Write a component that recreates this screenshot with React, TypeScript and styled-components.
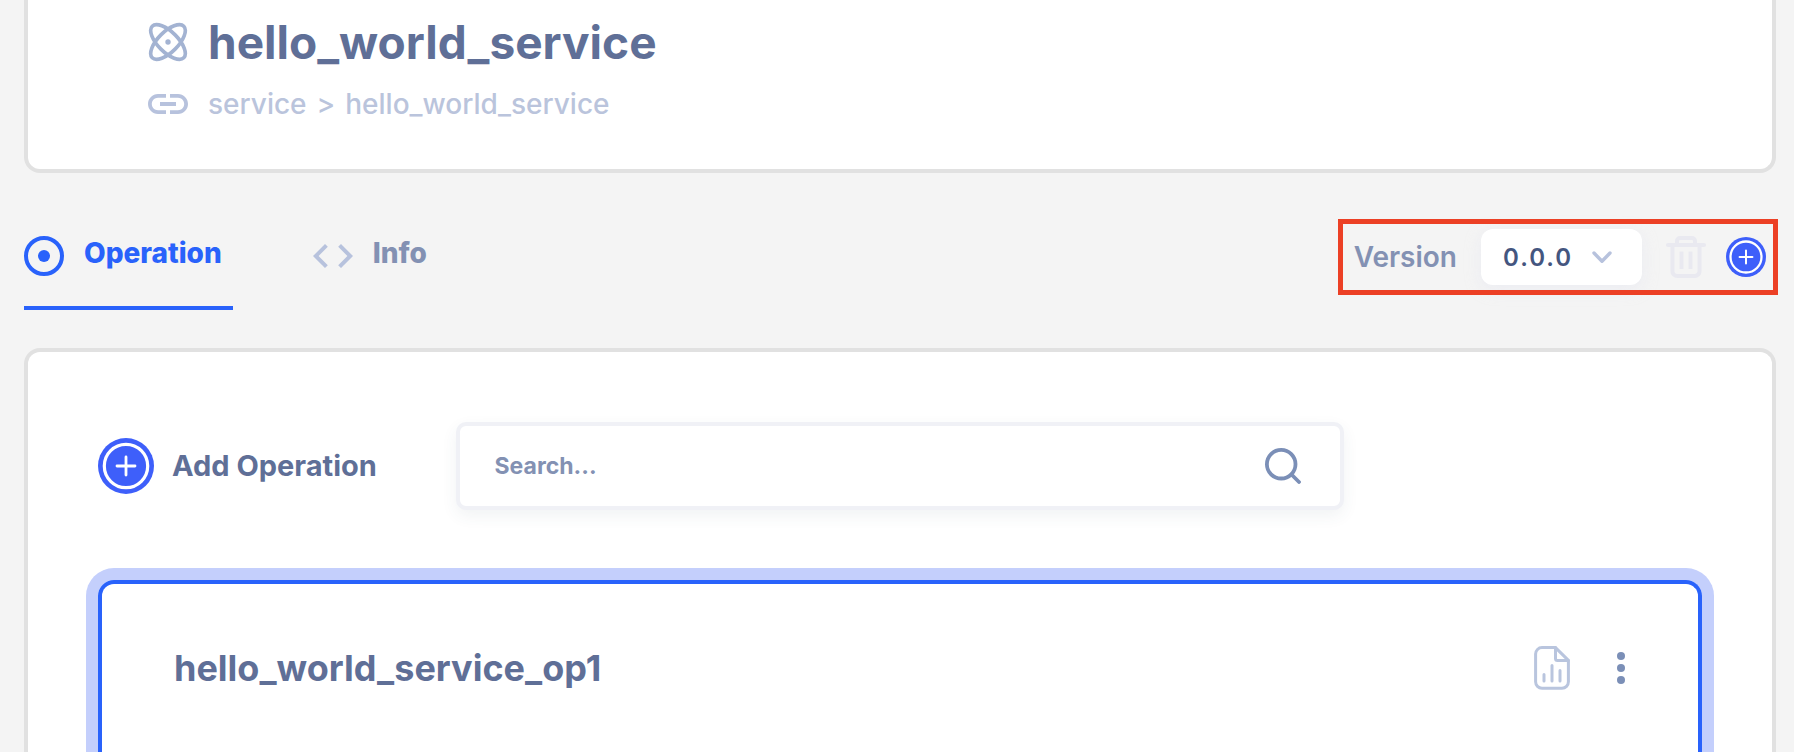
import React from "react";
import styled, { createGlobalStyle } from "styled-components";

const GlobalStyle = createGlobalStyle`
  *, *::before, *::after { box-sizing: border-box; }
  html, body { margin: 0; padding: 0; height: 100%; background: #f4f4f4; }
  #root { height: 100%; }
  body, button, input, select {
    font-family: Inter, "Liberation Sans", sans-serif;
  }
  button {
    margin: 0;
    padding: 0;
    border: 0;
    background: none;
    cursor: pointer;
  }
  svg { display: block; flex: none; }
`;

const Page = styled.div`
  display: flex;
  flex-direction: column;
  min-height: 100%;
  padding: 0 18px 0 24px;
`;

const ServiceHeader = styled.header`
  display: flex;
  flex-direction: column;
  gap: 16px;
  padding: 16px 120px 45px;
  background: #ffffff;
  border: 4px solid #e1e1e1;
  border-top: 0;
  border-radius: 0 0 16px 16px;
`;

const HeaderRow = styled.div`
  display: flex;
  align-items: center;
  gap: 20px;
`;

const ServiceTitle = styled.h1`
  margin: 0;
  font-size: 46px;
  line-height: 52px;
  font-weight: 700;
  color: #5f6f97;
`;

const Breadcrumb = styled.nav`
  display: flex;
  gap: 10px;
  font-size: 28px;
  line-height: 40px;
  font-weight: 500;
  color: #bac4dc;
`;

const Crumb = styled.a`
  color: inherit;
  text-decoration: none;
`;

const Toolbar = styled.div`
  display: flex;
  justify-content: space-between;
  align-items: flex-end;
  margin: 46px 0 38px;
`;

const Tabs = styled.div`
  display: flex;
  gap: 80px;
  padding-top: 17px;
`;

const Tab = styled.button<{ $active?: boolean }>`
  display: flex;
  align-items: flex-start;
  gap: 20px;
  padding: 0 11px 30px 0;
  border-bottom: 4px solid ${(p) => (p.$active ? "#2962fb" : "transparent")};
  font-size: 28px;
  line-height: 34px;
  font-weight: 800;
  color: ${(p) => (p.$active ? "#2962fb" : "#8391b3")};
`;

const TabIcon = styled.span`
  display: flex;
  align-items: center;
  height: 40px;
`;

const VersionPanel = styled.div`
  position: relative;
  display: flex;
  align-items: center;
  align-self: flex-start;
  height: 76px;
  margin-right: -2px;
  padding: 0 12px 0 16px;

  &::after {
    content: "";
    position: absolute;
    inset: 0;
    border: 5px solid #ec4025;
    pointer-events: none;
  }
`;

const VersionLabel = styled.label`
  margin-right: 24px;
  font-size: 28px;
  line-height: 34px;
  font-weight: 600;
  color: #8391b3;
`;

const SelectBox = styled.span`
  position: relative;
  display: flex;
  width: 161px;
  margin-right: 24px;
`;

const VersionSelect = styled.select`
  appearance: none;
  width: 100%;
  height: 56px;
  padding: 0 50px 0 22px;
  border: 0;
  border-radius: 12px;
  background: #ffffff;
  box-shadow: 0 4px 16px rgba(220, 224, 240, 0.35);
  font-size: 24px;
  font-weight: 600;
  letter-spacing: 2px;
  color: #44567f;
`;

const SelectArrow = styled.span`
  position: absolute;
  top: 22px;
  right: 30px;
  pointer-events: none;
`;

const DeleteButton = styled.button`
  margin-right: 20px;
`;

const OperationsPanel = styled.main`
  flex: 1;
  display: flex;
  flex-direction: column;
  gap: 70px;
  padding: 70px 70px 0;
  background: #ffffff;
  border: 4px solid #e1e1e1;
  border-bottom: 0;
  border-radius: 16px 16px 0 0;
`;

const ActionRow = styled.div`
  display: grid;
  grid-template-columns: 2fr 5fr 2fr;
  column-gap: 2px;
  align-items: center;
`;

const AddButton = styled.button`
  display: flex;
  align-items: center;
  gap: 18px;
  font-size: 29px;
  line-height: 36px;
  font-weight: 700;
  color: #5f6f97;
  white-space: nowrap;
`;

const SearchBox = styled.label`
  display: flex;
  align-items: center;
  height: 88px;
  padding: 0 39px 0 35px;
  background: #ffffff;
  border: 4px solid #f0f1f6;
  border-radius: 10px;
  box-shadow: 0 6px 16px rgba(60, 80, 100, 0.07);
`;

const SearchInput = styled.input`
  flex: 1;
  min-width: 0;
  padding: 0;
  border: 0;
  outline: 0;
  background: none;
  font-size: 23px;
  line-height: 30px;
  font-weight: 700;
  color: #5f6f97;

  &::placeholder {
    color: #8391b3;
    opacity: 1;
  }
`;

const OperationCard = styled.article`
  flex: 1;
  display: flex;
  align-items: flex-start;
  justify-content: space-between;
  padding: 62px 73px 0 72px;
  border: 4px solid #2962fb;
  border-bottom: 0;
  border-radius: 16px 16px 0 0;
  box-shadow: 0 0 0 12px #c4cffc;
`;

const OperationName = styled.h2`
  margin: 0;
  font-size: 36px;
  line-height: 44px;
  font-weight: 700;
  color: #5f6f97;
`;

const CardActions = styled.div`
  display: flex;
  align-items: center;
  gap: 47px;
  height: 44px;
`;

const AtomIcon = () => (
  <svg width="40" height="40" viewBox="1.6 1.6 20.8 20.8" fill="none" stroke="#a3b3d2" strokeWidth="1.9">
    <circle cx="12" cy="12" r="1.4" fill="#a3b3d2" stroke="none" />
    <path d="M20.2 20.2c2.04-2.03.02-7.36-4.5-11.9-4.54-4.52-9.87-6.54-11.9-4.5-2.04 2.03-.02 7.36 4.5 11.9 4.54 4.52 9.87 6.54 11.9 4.5Z" />
    <path d="M15.7 15.7c4.52-4.54 6.54-9.87 4.5-11.9-2.03-2.04-7.36-.02-11.9 4.5-4.52 4.54-6.54 9.87-4.5 11.9 2.03 2.04 7.36.02 11.9-4.5Z" />
  </svg>
);

const LinkIcon = () => (
  <svg width="40" height="20" viewBox="2 7 20 10" fill="#b7c2dd">
    <path d="M3.9 12c0-1.71 1.39-3.1 3.1-3.1h4V7H7c-2.76 0-5 2.24-5 5s2.24 5 5 5h4v-1.9H7c-1.71 0-3.1-1.39-3.1-3.1zM8 13h8v-2H8v2zm9-6h-4v1.9h4c1.71 0 3.1 1.39 3.1 3.1s-1.39 3.1-3.1 3.1h-4V17h4c2.76 0 5-2.24 5-5s-2.24-5-5-5z" />
  </svg>
);

const TargetIcon = () => (
  <svg width="40" height="40" viewBox="0 0 40 40">
    <circle cx="20" cy="20" r="18" fill="none" stroke="#2962fb" strokeWidth="4" />
    <circle cx="20" cy="20" r="6" fill="#2962fb" />
  </svg>
);

const CodeIcon = () => (
  <svg width="40" height="24" viewBox="2 6 20 12" fill="#b7c2dd">
    <path d="M9.4 16.6L4.8 12l4.6-4.6L8 6l-6 6 6 6 1.4-1.4zm5.2 0l4.6-4.6-4.6-4.6L16 6l6 6-6 6-1.4-1.4z" />
  </svg>
);

const ChevronIcon = () => (
  <svg width="20" height="13" viewBox="0 0 20 13" fill="none" stroke="#b7c2dd" strokeWidth="3.4" strokeLinecap="round" strokeLinejoin="round">
    <path d="M2 2l8 8.2L18 2" />
  </svg>
);

const TrashIcon = () => (
  <svg width="40" height="44" viewBox="0 0 40 44" fill="none" stroke="#e9e9f0" strokeWidth="4" strokeLinecap="round" strokeLinejoin="round">
    <path d="M2 10h36M11 9V6a3 3 0 0 1 3-3h12a3 3 0 0 1 3 3v3M6.4 10v26a5 5 0 0 0 5 5h17.2a5 5 0 0 0 5-5V10" />
    <path d="M15.5 16.5V34M24.5 16.5V34" strokeLinecap="butt" />
  </svg>
);

const AddIcon = ({ size }: { size: number }) => (
  <svg width={size} height={size} viewBox="0 0 56 56" fill="none">
    <circle cx="28" cy="28" r="28" fill="#3e5ffa" />
    <circle cx="28" cy="28" r="21.7" stroke="#ffffff" strokeWidth="3.2" />
    <path d="M28 19v18M19 28h18" stroke="#ffffff" strokeWidth="2.8" strokeLinecap="round" />
  </svg>
);

const SearchIcon = () => (
  <svg width="36" height="36" viewBox="0 0 36 36" fill="none" stroke="#7b8fb7" strokeWidth="3.8" strokeLinecap="round">
    <circle cx="16.2" cy="16.2" r="14.3" />
    <path d="M26.5 26.5L34 34" />
  </svg>
);

const ReportIcon = () => (
  <svg width="36" height="44" viewBox="0 0 36 44" fill="none" stroke="#b9c5de" strokeWidth="3" strokeLinecap="round" strokeLinejoin="round">
    <path d="M21.5 1.6H8a6.400 6.400 0 0 0-6.400 6.400v27.800a6.400 6.400 0 0 0 6.400 6.400h20a6.400 6.400 0 0 0 6.400-6.400V14.400z" />
    <path d="M21.5 1.6v10.800a2 2 0 0 0 2 2h10.900M10 28.500v6.500M18 19.500V35M26 24.500V35" />
  </svg>
);

const MoreIcon = () => (
  <svg width="8" height="32" viewBox="0 0 8 32" fill="#7b8fb7">
    <circle cx="4" cy="4" r="4" />
    <circle cx="4" cy="16" r="4" />
    <circle cx="4" cy="28" r="4" />
  </svg>
);

export default function App() {
  return (
    <>
      <GlobalStyle />
      <Page>
        <ServiceHeader>
          <HeaderRow>
            <AtomIcon />
            <ServiceTitle>hello_world_service</ServiceTitle>
          </HeaderRow>
          <HeaderRow>
            <LinkIcon />
            <Breadcrumb aria-label="Breadcrumb">
              <Crumb href="#service">service</Crumb>
              <span>&gt;</span>
              <Crumb href="#hello_world_service">hello_world_service</Crumb>
            </Breadcrumb>
          </HeaderRow>
        </ServiceHeader>

        <Toolbar>
          <Tabs role="tablist">
            <Tab type="button" role="tab" aria-selected="true" $active>
              <TabIcon><TargetIcon /></TabIcon>
              Operation
            </Tab>
            <Tab type="button" role="tab" aria-selected="false">
              <TabIcon><CodeIcon /></TabIcon>
              Info
            </Tab>
          </Tabs>
          <VersionPanel>
            <VersionLabel htmlFor="version">Version</VersionLabel>
            <SelectBox>
              <VersionSelect id="version" defaultValue="0.0.0">
                <option value="0.0.0">0.0.0</option>
              </VersionSelect>
              <SelectArrow><ChevronIcon /></SelectArrow>
            </SelectBox>
            <DeleteButton type="button" aria-label="Delete version">
              <TrashIcon />
            </DeleteButton>
            <button type="button" aria-label="Add version">
              <AddIcon size={40} />
            </button>
          </VersionPanel>
        </Toolbar>

        <OperationsPanel>
          <ActionRow>
            <AddButton type="button">
              <AddIcon size={56} />
              Add Operation
            </AddButton>
            <SearchBox>
              <SearchInput type="text" placeholder="Search..." aria-label="Search operations" />
              <SearchIcon />
            </SearchBox>
          </ActionRow>
          <OperationCard>
            <OperationName>hello_world_service_op1</OperationName>
            <CardActions>
              <button type="button" aria-label="View report">
                <ReportIcon />
              </button>
              <button type="button" aria-label="More actions">
                <MoreIcon />
              </button>
            </CardActions>
          </OperationCard>
        </OperationsPanel>
      </Page>
    </>
  );
}
